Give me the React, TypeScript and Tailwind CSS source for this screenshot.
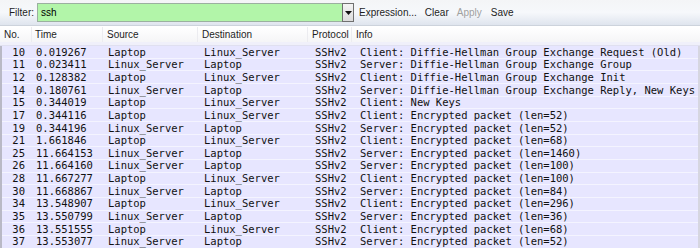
import React from "react";

const rows: [string, string, string, string, string, string][] = [
  ["10", "0.019267", "Laptop", "Linux_Server", "SSHv2", "Client: Diffie-Hellman Group Exchange Request (Old)"],
  ["11", "0.023411", "Linux_Server", "Laptop", "SSHv2", "Server: Diffie-Hellman Group Exchange Group"],
  ["12", "0.128382", "Laptop", "Linux_Server", "SSHv2", "Client: Diffie-Hellman Group Exchange Init"],
  ["14", "0.180761", "Linux_Server", "Laptop", "SSHv2", "Server: Diffie-Hellman Group Exchange Reply, New Keys"],
  ["15", "0.344019", "Laptop", "Linux_Server", "SSHv2", "Client: New Keys"],
  ["17", "0.344116", "Laptop", "Linux_Server", "SSHv2", "Client: Encrypted packet (len=52)"],
  ["19", "0.344196", "Linux_Server", "Laptop", "SSHv2", "Server: Encrypted packet (len=52)"],
  ["21", "1.661846", "Laptop", "Linux_Server", "SSHv2", "Client: Encrypted packet (len=68)"],
  ["25", "11.664153", "Linux_Server", "Laptop", "SSHv2", "Server: Encrypted packet (len=1460)"],
  ["26", "11.664160", "Linux_Server", "Laptop", "SSHv2", "Server: Encrypted packet (len=100)"],
  ["28", "11.667277", "Laptop", "Linux_Server", "SSHv2", "Client: Encrypted packet (len=100)"],
  ["30", "11.668867", "Linux_Server", "Laptop", "SSHv2", "Server: Encrypted packet (len=84)"],
  ["34", "13.548907", "Laptop", "Linux_Server", "SSHv2", "Client: Encrypted packet (len=296)"],
  ["35", "13.550799", "Linux_Server", "Laptop", "SSHv2", "Server: Encrypted packet (len=36)"],
  ["36", "13.551555", "Laptop", "Linux_Server", "SSHv2", "Client: Encrypted packet (len=68)"],
  ["37", "13.553077", "Linux_Server", "Laptop", "SSHv2", "Server: Encrypted packet (len=52)"],
];

export default function App() {
  const ui = { fontFamily: '"Liberation Sans", Arial, sans-serif' };
  const mono = { fontFamily: '"DejaVu Sans Mono", monospace' };
  return (
    <div className="w-[700px] h-[248px] overflow-hidden bg-white flex flex-col">
      {/* toolbar */}
      <div
        className="h-[26px] shrink-0 flex items-center bg-gradient-to-b from-[#f4f5f7] via-[#f6f8fb] to-[#dfe5ee] border-b border-[#cdd3dc] text-[10px] text-[#1e1e1e]"
        style={ui}
      >
        <span className="ml-[9px] w-[28px]">Filter:</span>
        <div className="ml-0 h-[19px] w-[305px] flex items-center bg-[#b2f5a9] border border-[#9bb0a0] border-r-0">
          <span className="ml-[3px] text-[10px] text-black">ssh</span>
        </div>
        <div className="h-[19px] w-[12px] flex items-center justify-center bg-gradient-to-b from-[#f4f4f4] to-[#dcdcdc] border border-[#707070]">
          <svg width="7" height="4" viewBox="0 0 7 4">
            <path d="M0 0 L7 0 L3.5 4 Z" fill="#111" />
          </svg>
        </div>
        <span className="ml-[5px]">Expression...</span>
        <span className="ml-[8px]">Clear</span>
        <span className="ml-[8px] text-[#a0a0a0]">Apply</span>
        <span className="ml-[9px]">Save</span>
      </div>
      {/* header */}
      <div
        className="h-[15px] mt-[1px] shrink-0 flex items-center bg-gradient-to-b from-[#ffffff] to-[#f5f5f7] text-[10px] text-[#1e1e1e]"
        style={ui}
      >
        <div className="w-[32px] pl-[4px] h-full flex items-center border-r border-[#ececf0]">No.</div>
        <div className="w-[71px] pl-[3px] h-full flex items-center border-r border-[#ececf0]">Time</div>
        <div className="w-[95px] pl-[4px] h-full flex items-center border-r border-[#ececf0]">Source</div>
        <div className="w-[110px] pl-[4px] h-full flex items-center border-r border-[#ececf0]">Destination</div>
        <div className="w-[44px] pl-[4px] h-full flex items-center border-r border-[#ececf0]">Protocol</div>
        <div className="flex-1 pl-[4px] h-full flex items-center">Info</div>
      </div>
      <div className="h-[4px] shrink-0 bg-[#f0f0fa] border-b border-[#e0e0f0]" />
      {/* rows */}
      <div className="flex-1 overflow-hidden border-l-2 border-[#b9b9c6] border-r-2 border-r-[#d6d6e0] bg-[#e7e6ff]">
        {rows.map((r) => (
          <div
            key={r[0]}
            className="h-[12.67px] flex items-center bg-[#e7e6ff] border-b border-[#f4f4ff] text-[10.5px] text-[#111] whitespace-nowrap leading-none"
            style={mono}
          >
            <div className="w-[23px] text-right">{r[0]}</div>
            <div className="w-[83px] pl-[11px]">{r[1]}</div>
            <div className="w-[96px]">{r[2]}</div>
            <div className="w-[111px]">{r[3]}</div>
            <div className="w-[45px]">{r[4]}</div>
            <div className="flex-1">{r[5]}</div>
          </div>
        ))}
      </div>
    </div>
  );
}
